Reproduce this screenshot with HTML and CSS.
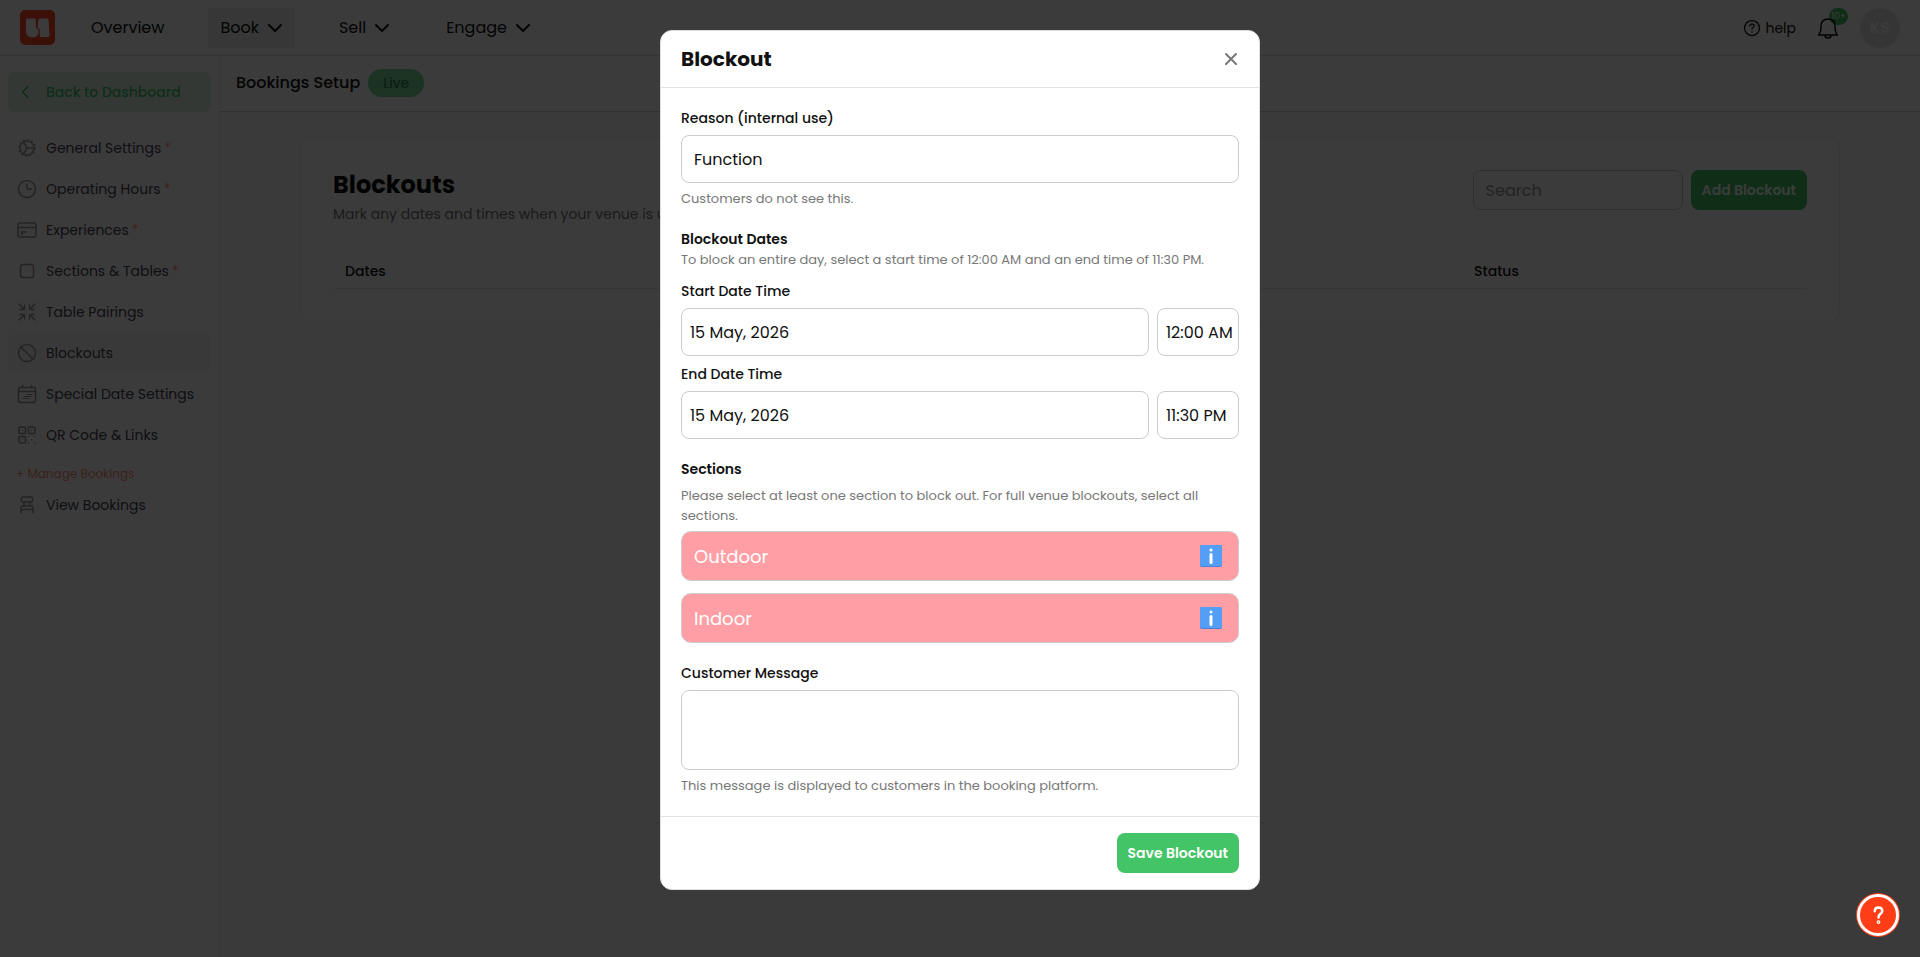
FILE: index.html
```html
<!DOCTYPE html>
<html lang="en">
<head>
    <meta charset="UTF-8">
    <meta name="viewport" content="width=device-width, initial-scale=1.0">
    <title>Blockouts</title>
    <link rel="stylesheet" href="styles.css">
</head>
<body>

<!-- Top navigation -->
<header class="topbar">
    <a class="logo" href="#" aria-label="Home">
        <svg width="35" height="35" viewBox="0 0 35 35">
            <rect width="35" height="35" rx="5" fill="#ff4526"/>
            <path d="M7.500 8.500h7q1.200 0 1.200 1.200l.3 7q.2 2 1.500 2.500l1 .3V22q0 5.300-6.200 5.300Q6 27.300 6 21.500V10q0-1.500 1.500-1.500zM20 8.500h7q1.500 0 1.600 1.500l.9 15.500q0 1.500-1.500 1.500h-7q-1.300 0-1.300-1.300V19q-2-.3-1.900-2l.5-7q.2-1.500 1.700-1.500z" fill="#fff"/>
        </svg>
    </a>
    <nav class="main-nav">
        <button class="nav-item">Overview</button>
        <button class="nav-item active">Book <svg class="chevron" viewBox="0 0 16 16"><path d="M2 5l6 6 6-6"/></svg></button>
        <button class="nav-item">Sell <svg class="chevron" viewBox="0 0 16 16"><path d="M2 5l6 6 6-6"/></svg></button>
        <button class="nav-item">Engage <svg class="chevron" viewBox="0 0 16 16"><path d="M2 5l6 6 6-6"/></svg></button>
    </nav>
    <div class="top-actions">
        <a class="help-link" href="#">
            <svg class="icon" viewBox="0 0 18 18"><circle cx="9" cy="9" r="7.500"/><path d="M6.800 7q0-2 2.200-2t2.200 1.800Q11.200 8 9 9.200v1M9 12.800v.2"/></svg>
            help
        </a>
        <button class="bell" aria-label="Notifications">
            <span class="badge">10+</span>
            <svg class="icon" viewBox="0 0 22 22"><path d="M1.500 18q2.500-2.500 2.500-8.500Q4 2 11 2t7 7.500q0 6 2.500 8.500z"/><path d="M8 18.500q0 2.500 3 2.500t3-2.500"/></svg>
        </button>
        <div class="avatar">KS</div>
    </div>
</header>

<div class="layout">
    <!-- Sidebar -->
    <aside class="sidebar">
        <a class="back-link" href="#">
            <svg class="icon" viewBox="0 0 18 18"><path d="M11 3.500L5.500 9l5.500 5.500"/></svg>
            Back to Dashboard
        </a>
        <nav class="side-nav">
            <a class="side-item" href="#">
                <svg class="icon" viewBox="0 0 20 20"><circle cx="10" cy="10" r="7"/><circle cx="10" cy="10" r="8.300" stroke-linecap="butt" stroke-dasharray="1.500 2.850"/><path d="M10 10h7M10 10L6.500 4M10 10l-3.500 6"/></svg>
                <span>General Settings<span class="required">*</span></span>
            </a>
            <a class="side-item" href="#">
                <svg class="icon" viewBox="0 0 20 20"><circle cx="10" cy="10" r="8.500"/><path d="M10 5v5h4.500"/></svg>
                <span>Operating Hours<span class="required">*</span></span>
            </a>
            <a class="side-item" href="#">
                <svg class="icon" viewBox="0 0 20 20"><rect x="1" y="3" width="18" height="14" rx="2"/><path d="M1 7.500h18M4 12h5M4 14h2"/></svg>
                <span>Experiences<span class="required">*</span></span>
            </a>
            <a class="side-item" href="#">
                <svg class="icon" viewBox="0 0 20 20"><rect x="3.500" y="3.500" width="13" height="13" rx="2"/></svg>
                <span>Sections &amp; Tables<span class="required">*</span></span>
            </a>
            <a class="side-item" href="#">
                <svg class="icon" viewBox="0 0 20 20"><path d="M2 2l5.500 5.500M7.500 3v4.500H3M18 2l-5.500 5.500M12.500 3v4.500H17M2 18l5.500-5.500M7.500 17v-4.500H3M18 18l-5.500-5.500M12.500 17v-4.500H17"/></svg>
                <span>Table Pairings</span>
            </a>
            <a class="side-item active" href="#">
                <svg class="icon" viewBox="0 0 20 20"><circle cx="10" cy="10" r="8.500"/><path d="M4 4l12 12"/></svg>
                <span>Blockouts</span>
            </a>
            <a class="side-item" href="#">
                <svg class="icon" viewBox="0 0 20 20"><rect x="1.500" y="3.500" width="17" height="15" rx="2"/><path d="M1.500 7.500h17M5.500 1.500v2M14.500 1.500v2"/><path stroke-width="1" d="M10 10.500h5M7 12.500h7M6 14.500h6"/></svg>
                <span>Special Date Settings</span>
            </a>
            <a class="side-item" href="#">
                <svg class="icon" viewBox="0 0 20 20"><rect x="2" y="2" width="6.500" height="6.500" rx="1"/><rect x="11.500" y="2" width="6.500" height="6.500" rx="1"/><rect x="2" y="11.500" width="6.500" height="6.500" rx="1"/><path d="M5.200 5.200v.1M14.700 5.200v.1M5.200 14.700v.1M11.500 11.500v.1M18 11.500v.1M14.700 14.700h.1M11.500 18h.1M18 18h.1"/></svg>
                <span>QR Code &amp; Links</span>
            </a>
        </nav>
        <h4 class="side-heading">+ Manage Bookings</h4>
        <a class="side-item" href="#">
            <svg class="icon" viewBox="0 0 20 20"><rect x="4.500" y="2" width="11" height="5" rx="1"/><path d="M7 7v4M13 7v4M4 18v-5.500q0-1.500 1.500-1.500h9q1.500 0 1.500 1.500V18M4 14.500h12"/></svg>
            <span>View Bookings</span>
        </a>
    </aside>

    <!-- Page content -->
    <main class="content">
        <div class="page-head">
            <h1>Bookings Setup</h1>
            <span class="live-pill">Live</span>
        </div>
        <section class="card">
            <div class="card-head">
                <div>
                    <h2>Blockouts</h2>
                    <p>Mark any dates and times when your venue is unavailable.</p>
                </div>
                <div class="card-actions">
                    <input class="search" type="search" placeholder="Search" aria-label="Search">
                    <button class="btn">Add Blockout</button>
                </div>
            </div>
            <table class="blockout-table">
                <thead>
                    <tr>
                        <th>Dates</th>
                        <th class="status-col">Status</th>
                    </tr>
                </thead>
            </table>
        </section>
    </main>
</div>

<!-- Blockout modal -->
<div class="overlay">
    <form class="modal" role="dialog" aria-labelledby="modal-title">
        <div class="modal-header">
            <h2 id="modal-title">Blockout</h2>
            <button type="button" class="close" aria-label="Close">
                <svg viewBox="0 0 12 12"><path d="M1 1l10 10M11 1L1 11"/></svg>
            </button>
        </div>

        <div class="modal-body">
            <div class="field">
                <label for="reason">Reason (internal use)</label>
                <input type="text" id="reason" value="Function">
                <p class="hint">Customers do not see this.</p>
            </div>

            <div class="group">
                <h3>Blockout Dates</h3>
                <p class="note">To block an entire day, select a start time of 12:00 AM and an end time of 11:30 PM.</p>
                <div class="field">
                    <label for="start-date">Start Date Time</label>
                    <div class="date-row">
                        <input type="text" id="start-date" value="15 May, 2026">
                        <input type="text" class="time" value="12:00 AM" aria-label="Start time">
                    </div>
                </div>
                <div class="field">
                    <label for="end-date">End Date Time</label>
                    <div class="date-row">
                        <input type="text" id="end-date" value="15 May, 2026">
                        <input type="text" class="time" value="11:30 PM" aria-label="End time">
                    </div>
                </div>
            </div>

            <div class="group sections">
                <h3>Sections</h3>
                <p class="note">Please select at least one section to block out. For full venue blockouts, select all sections.</p>
                <button type="button" class="section-btn">
                    Outdoor
                    <svg class="info" viewBox="0 0 22 22"><rect width="22" height="22" rx="2" fill="#4a80d8"/><rect width="22" height="21" rx="2" fill="#549ff5"/><circle cx="11" cy="5" r="1.500" fill="#fff"/><rect x="9.500" y="8" width="3" height="11" rx="1.500" fill="#fff"/></svg>
                </button>
                <button type="button" class="section-btn">
                    Indoor
                    <svg class="info" viewBox="0 0 22 22"><rect width="22" height="22" rx="2" fill="#4a80d8"/><rect width="22" height="21" rx="2" fill="#549ff5"/><circle cx="11" cy="5" r="1.500" fill="#fff"/><rect x="9.500" y="8" width="3" height="11" rx="1.500" fill="#fff"/></svg>
                </button>
            </div>

            <div class="field">
                <label for="message">Customer Message</label>
                <textarea id="message"></textarea>
                <p class="hint">This message is displayed to customers in the booking platform.</p>
            </div>
        </div>

        <div class="modal-footer">
            <button type="submit" class="btn">Save Blockout</button>
        </div>
    </form>
</div>

<button class="help-bubble" aria-label="Help">
    <svg viewBox="0 0 20 24"><path d="M5.500 7.500q0-4.500 4.500-4.500t4.500 4.200q0 2.300-2.500 3.800-2 1.300-2 4"/><circle cx="10" cy="20.500" r=".8"/></svg>
</button>

</body>
</html>
```

FILE: styles.css
```css
* {
    box-sizing: border-box;
}

body {
    margin: 0;
    min-height: 100vh;
    display: flex;
    flex-direction: column;
    font-family: Poppins, Inter, sans-serif;
    font-size: 14px;
    line-height: 20px;
    color: #111;
    background-color: #fff;
}

h1, h2, h3, h4, p {
    margin: 0;
}

a {
    color: inherit;
    text-decoration: none;
}

button, input, textarea {
    font-family: inherit;
    color: inherit;
}

button {
    border: none;
    cursor: pointer;
}

svg {
    flex: none;
    fill: none;
    stroke-linecap: round;
    stroke-linejoin: round;
}

.icon {
    width: 18px;
    height: 18px;
    stroke: currentColor;
    stroke-width: 1.5;
}

/* Top navigation */
.topbar {
    display: flex;
    align-items: center;
    height: 56px;
    padding: 0 20px;
    border-bottom: 1px solid #ddd;
}

.logo {
    display: flex;
}

.main-nav {
    display: flex;
    gap: 32px;
    margin-left: 24px;
}

.nav-item {
    display: flex;
    align-items: center;
    gap: 8px;
    height: 40px;
    padding: 0 12px;
    font-size: 16px;
    background-color: #fdfdfd;
}

.nav-item.active {
    background-color: #ebebeb;
}

.chevron {
    width: 16px;
    height: 16px;
    stroke: currentColor;
    stroke-width: 2;
}

.top-actions {
    display: flex;
    align-items: center;
    gap: 21px;
    margin-left: auto;
}

.help-link {
    display: flex;
    align-items: center;
    gap: 4px;
}

.help-link .icon {
    stroke-width: 1.25;
}

.bell {
    position: relative;
    display: flex;
    padding: 0;
    background: none;
}

.bell .icon {
    position: relative;
    width: 22px;
    height: 22px;
}

.badge {
    position: absolute;
    top: -9px;
    right: -9px;
    padding: 0 2px;
    border-radius: 9px;
    font-size: 9px;
    line-height: 17px;
    color: #fff;
    background-color: #43c466;
}

.avatar {
    width: 40px;
    height: 40px;
    border-radius: 50%;
    line-height: 40px;
    text-align: center;
    font-size: 16px;
    font-weight: 600;
    color: #fff;
    background-color: #e6e6e6;
}

/* Sidebar */
.layout {
    display: flex;
    flex: 1;
}

.sidebar {
    width: 220px;
    padding: 16px 8px;
    border-right: 1px solid #e8e8e8;
}

.back-link {
    display: flex;
    align-items: center;
    gap: 11px;
    height: 40px;
    margin-bottom: 17px;
    padding: 0 9px;
    border-radius: 6px;
    font-weight: 500;
    color: #43c466;
    background-color: #dff3e6;
}

.side-nav {
    display: flex;
    flex-direction: column;
    gap: 3px;
}

.side-item {
    display: flex;
    align-items: center;
    gap: 9px;
    height: 38px;
    padding: 0 9px;
    border-radius: 6px;
    color: #454552;
}

.side-item.active {
    background-color: #f7f7f7;
}

.side-item .icon {
    width: 20px;
    height: 20px;
    color: #999;
}

.required {
    margin-left: 3px;
    color: #ff9a88;
}

.side-heading {
    margin-top: 8px;
    padding-left: 8px;
    font-size: 12px;
    font-weight: 400;
    line-height: 24px;
    color: #f58f7c;
}

/* Page content */
.content {
    flex: 1;
    background-color: #f8f8f8;
}

.page-head {
    display: flex;
    align-items: center;
    gap: 8px;
    height: 56px;
    padding: 0 16px 2px;
    border-bottom: 1px solid #d4d4d4;
    background-color: #fff;
}

.page-head h1 {
    font-size: 16px;
    font-weight: 500;
}

.live-pill {
    padding: 4px 15px;
    border-radius: 14px;
    color: #287a48;
    background-color: #79d696;
}

.card {
    margin: 25px 80px;
    padding: 32px;
    border: 1px solid #eee;
    border-radius: 12px;
    background-color: #fff;
}

.card-head {
    display: flex;
    justify-content: space-between;
    align-items: flex-start;
}

.card-head h2 {
    font-size: 24px;
    line-height: 30px;
}

.card-head p {
    padding-top: 4px;
    color: #777;
}

.card-actions {
    display: flex;
    gap: 8px;
}

.search {
    width: 210px;
    height: 40px;
    padding: 0 12px;
    border: 1px solid #ccc;
    border-radius: 8px;
    font-size: 16px;
    background-color: #fff;
}

.search::placeholder {
    color: #999;
}

.blockout-table {
    width: 100%;
    margin-top: 16px;
    border-collapse: collapse;
}

.blockout-table th {
    padding: 21px 12px 7px;
    border-bottom: 1px solid #e8e8e8;
    text-align: left;
    font-weight: 500;
}

.blockout-table .status-col {
    width: 345px;
}

.btn {
    height: 40px;
    padding: 0 11px;
    border-radius: 8px;
    font-size: 14px;
    font-weight: 600;
    color: #fff;
    background-color: #43c466;
}

/* Modal */
.overlay {
    position: fixed;
    inset: 0;
    display: flex;
    justify-content: center;
    align-items: flex-start;
    padding-top: 30px;
    background-color: rgba(0, 0, 0, 0.77);
}

.modal {
    width: 600px;
    border: 1px solid #ddd;
    border-radius: 12px;
    background-color: #fff;
}

.modal-header {
    display: flex;
    justify-content: space-between;
    align-items: center;
    height: 57px;
    padding: 0 20px;
    border-bottom: 1px solid #e3e3e3;
}

.modal-header h2 {
    font-size: 20px;
}

.close {
    display: flex;
    padding: 2px;
    background: none;
}

.close svg {
    width: 12px;
    height: 12px;
    stroke: #777;
    stroke-width: 2;
}

.modal-body {
    display: flex;
    flex-direction: column;
    gap: 20px;
    padding: 20px;
}

.field label {
    display: block;
    margin-bottom: 7px;
    font-weight: 500;
}

.field input,
.field textarea {
    display: block;
    width: 100%;
    height: 48px;
    padding: 0 12px;
    border: 1px solid #ccc;
    border-radius: 8px;
    font-size: 16px;
    background-color: #fff;
}

.field textarea {
    height: 80px;
    padding: 12px;
    resize: none;
}

.hint,
.note {
    font-size: 13px;
    color: #777;
}

.hint {
    margin-top: 6px;
}

.group h3 {
    font-size: 14px;
    font-weight: 600;
    line-height: 21px;
}

.group .note {
    margin-bottom: 11px;
}

.group .field + .field {
    margin-top: 8px;
}

.date-row {
    display: flex;
    gap: 8px;
}

.date-row input {
    flex: 1;
    min-width: 0;
    padding: 0 8px;
}

.date-row .time {
    flex: 0 0 82px;
    padding-right: 0;
}

.sections .note {
    margin-top: 6px;
    margin-bottom: 5px;
}

.section-btn {
    display: flex;
    justify-content: space-between;
    align-items: center;
    width: 100%;
    height: 50px;
    padding: 0 16px 0 12px;
    border: 1px solid #ccc;
    border-radius: 10px;
    font-size: 18px;
    color: #fff;
    background-color: #ff9fa5;
}

.section-btn + .section-btn {
    margin-top: 12px;
}

.info {
    width: 22px;
    height: 22px;
}

.modal-footer {
    display: flex;
    justify-content: flex-end;
    padding: 16px 20px;
    border-top: 1px solid #e3e3e3;
}

/* Floating help button */
.help-bubble {
    position: fixed;
    right: 21px;
    bottom: 21px;
    display: flex;
    justify-content: center;
    align-items: center;
    width: 42px;
    height: 42px;
    padding: 0;
    border: 3px solid #fff;
    border-radius: 50%;
    background-color: #ff3d17;
    box-shadow: 0 0 0 1px #ff3d17;
}

.help-bubble svg {
    width: 17px;
    height: 20px;
    stroke: #fff;
    stroke-width: 3;
}
```
